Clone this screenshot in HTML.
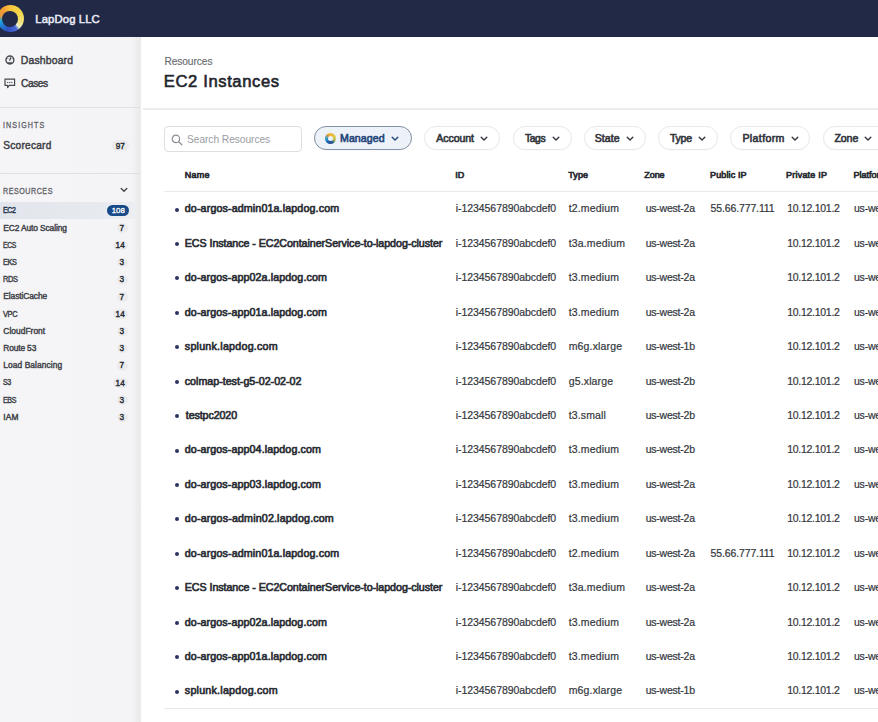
<!DOCTYPE html><html><head><meta charset="utf-8"><style>
*{margin:0;padding:0;box-sizing:border-box}
html,body{width:878px;height:722px;overflow:hidden;background:#fff;font-family:"Liberation Sans",sans-serif}
.t{position:absolute;white-space:nowrap;line-height:normal;font-family:"Liberation Sans",sans-serif}
.a{position:absolute}
#hdr{position:absolute;left:0;top:0;width:878px;height:36.6px;background:#212946}
#logo{position:absolute;left:-3.1px;top:5px;width:27px;height:27px;border-radius:50%;
 background:conic-gradient(from 0deg,#f6c53e 0deg,#f5d84a 60deg,#f2e27a 110deg,#e8eccc 135deg,#4a6ad8 150deg,#2f4fbf 195deg,#1e7fd2 230deg,#19a8df 255deg,#e99a3a 285deg,#f39a35 315deg,#f6b43a 345deg,#f6c53e 360deg)}
#logo:after{content:"";position:absolute;left:5.5px;top:5.5px;width:16px;height:16px;border-radius:50%;background:#212946}
#side{position:absolute;left:0;top:36.6px;width:142px;height:686px;background:linear-gradient(90deg,#f5f5f7 0px,#f4f4f6 132px,#eeeeef 136px,#ebebec 140.5px,#fbfbfa 141px,#ffffff 142px)}
.hr{position:absolute;height:1px;background:#dfe0e4}
.bd{position:absolute;border-radius:6px;background:#ebebee}
.sel{position:absolute;left:0;top:202px;width:136px;height:16.5px;background:linear-gradient(90deg,#e2e6ec,#e6e9ee 70%,#eceef1);border-radius:0 4px 4px 0}
.chev{position:absolute;border-right:1.3px solid #45484e;border-bottom:1.3px solid #45484e;transform:rotate(45deg)}
.search{position:absolute;left:164px;top:126px;width:138px;height:26px;border:1px solid #dddfe3;border-radius:4px;background:#fff}
.btn{position:absolute;top:126.3px;height:24.2px;border:1px solid #e8e9eb;border-radius:12.5px;background:#fff;box-shadow:0 0.5px 1px rgba(0,0,0,0.04)}
.btn.m{background:#edf2f8;border-color:#8391a5}
.ring{position:absolute;left:325.2px;top:133.1px;width:11px;height:11px;border-radius:50%;background:conic-gradient(#f2b63a,#d9c94a 70deg,#b8c060 110deg,#2e5f8a 150deg,#1f4f9a 200deg,#1e8fd0 250deg,#3aa0c8 280deg,#e39a3a 320deg,#f2b63a)}
.ring:after{content:"";position:absolute;left:2.7px;top:2.7px;width:5.6px;height:5.6px;border-radius:50%;background:#edf2f8}
.dot{position:absolute;left:175.1px;width:4px;height:4px;border-radius:50%;background:#2b3560}
</style></head><body>
<div id="hdr"><div id="logo"></div></div>
<div id="side"></div>
<svg class="a" style="left:4px;top:54px" width="12" height="12" viewBox="0 0 12 12"><circle cx="5.9" cy="6" r="3.95" fill="none" stroke="#44474d" stroke-width="1.4"/><path d="M2.6 8.2 A3.95 3.95 0 0 0 9.2 8.2 Z" fill="#44474d"/><path d="M5.8 6.4 L6.6 3.9" stroke="#44474d" stroke-width="1.3" stroke-linecap="round"/><circle cx="3.9" cy="4.5" r=".55" fill="#44474d"/><circle cx="8.1" cy="4.6" r=".55" fill="#44474d"/></svg>
<svg class="a" style="left:3.5px;top:77.5px" width="12" height="12" viewBox="0 0 12 12"><path d="M1 1.2 H10.6 V7.4 H5.2 L3.6 9.6 V7.4 H1 Z" fill="none" stroke="#46494f" stroke-width="1.2" stroke-linejoin="round"/><circle cx="3.7" cy="4.4" r=".65" fill="#46494f"/><circle cx="5.8" cy="4.4" r=".65" fill="#46494f"/><circle cx="7.9" cy="4.4" r=".65" fill="#46494f"/></svg>
<div class="hr" style="left:0;top:107px;width:140px"></div>
<div class="bd" style="left:112px;top:140px;width:16.5px;height:11px"></div>
<div class="hr" style="left:0;top:173px;width:140px"></div>
<svg class="a" style="left:119.7px;top:186.6px" width="8" height="6" viewBox="0 0 8 6"><path d="M1.2 1.4 L4 4.2 L6.8 1.4" fill="none" stroke="#404349" stroke-width="1.35" stroke-linecap="round" stroke-linejoin="round"/></svg>
<div class="sel"></div>
<div class="a" style="left:107px;top:204.8px;width:22px;height:11.2px;border-radius:6px;background:#174a87"></div>
<div class="bd" style="left:117.2px;top:223.40px;width:11.0px;height:9.5px"></div>
<div class="bd" style="left:112.7px;top:240.60px;width:15.5px;height:9.5px"></div>
<div class="bd" style="left:117.2px;top:257.80px;width:11.0px;height:9.5px"></div>
<div class="bd" style="left:117.2px;top:275.00px;width:11.0px;height:9.5px"></div>
<div class="bd" style="left:117.2px;top:292.20px;width:11.0px;height:9.5px"></div>
<div class="bd" style="left:112.7px;top:309.40px;width:15.5px;height:9.5px"></div>
<div class="bd" style="left:117.2px;top:326.60px;width:11.0px;height:9.5px"></div>
<div class="bd" style="left:117.2px;top:343.80px;width:11.0px;height:9.5px"></div>
<div class="bd" style="left:117.2px;top:361.00px;width:11.0px;height:9.5px"></div>
<div class="bd" style="left:112.7px;top:378.20px;width:15.5px;height:9.5px"></div>
<div class="bd" style="left:117.2px;top:395.40px;width:11.0px;height:9.5px"></div>
<div class="bd" style="left:117.2px;top:412.60px;width:11.0px;height:9.5px"></div>
<div class="hr" style="left:142.5px;top:108.2px;width:736px;height:1.6px;background:#ececee"></div>
<div class="search"></div>
<svg class="a" style="left:170.5px;top:134px" width="12" height="12" viewBox="0 0 12 12"><circle cx="4.9" cy="4.9" r="3.7" fill="none" stroke="#8a8d93" stroke-width="1.2"/><path d="M7.6 7.6 L10.8 10.8" stroke="#8a8d93" stroke-width="1.3" stroke-linecap="round"/></svg>
<div class="btn m" style="left:314.1px;width:97.7px"></div>
<svg class="a" style="left:391.20px;top:136px" width="8" height="6" viewBox="0 0 8 6"><path d="M1.2 1.3 L4 4 L6.8 1.3" fill="none" stroke="#25467a" stroke-width="1.4" stroke-linecap="round" stroke-linejoin="round"/></svg>
<div class="btn" style="left:423.9px;width:76.3px"></div>
<svg class="a" style="left:480.00px;top:136px" width="8" height="6" viewBox="0 0 8 6"><path d="M1.2 1.3 L4 4 L6.8 1.3" fill="none" stroke="#33363d" stroke-width="1.4" stroke-linecap="round" stroke-linejoin="round"/></svg>
<div class="btn" style="left:512.5px;width:59.4px"></div>
<svg class="a" style="left:551.80px;top:136px" width="8" height="6" viewBox="0 0 8 6"><path d="M1.2 1.3 L4 4 L6.8 1.3" fill="none" stroke="#33363d" stroke-width="1.4" stroke-linecap="round" stroke-linejoin="round"/></svg>
<div class="btn" style="left:584.0px;width:62.1px"></div>
<svg class="a" style="left:626.00px;top:136px" width="8" height="6" viewBox="0 0 8 6"><path d="M1.2 1.3 L4 4 L6.8 1.3" fill="none" stroke="#33363d" stroke-width="1.4" stroke-linecap="round" stroke-linejoin="round"/></svg>
<div class="btn" style="left:658.4px;width:60.1px"></div>
<svg class="a" style="left:697.90px;top:136px" width="8" height="6" viewBox="0 0 8 6"><path d="M1.2 1.3 L4 4 L6.8 1.3" fill="none" stroke="#33363d" stroke-width="1.4" stroke-linecap="round" stroke-linejoin="round"/></svg>
<div class="btn" style="left:730.2px;width:80.2px"></div>
<svg class="a" style="left:790.70px;top:136px" width="8" height="6" viewBox="0 0 8 6"><path d="M1.2 1.3 L4 4 L6.8 1.3" fill="none" stroke="#33363d" stroke-width="1.4" stroke-linecap="round" stroke-linejoin="round"/></svg>
<div class="btn" style="left:823.4px;width:81.6px"></div>
<svg class="a" style="left:863.60px;top:136px" width="8" height="6" viewBox="0 0 8 6"><path d="M1.2 1.3 L4 4 L6.8 1.3" fill="none" stroke="#33363d" stroke-width="1.4" stroke-linecap="round" stroke-linejoin="round"/></svg>
<div class="ring"></div>
<div class="hr" style="left:164px;top:190.5px;width:714px;background:#e9eaed"></div>
<div class="dot" style="top:208.00px"></div>
<div class="dot" style="top:242.00px"></div>
<div class="dot" style="top:276.00px"></div>
<div class="dot" style="top:311.00px"></div>
<div class="dot" style="top:345.00px"></div>
<div class="dot" style="top:380.00px"></div>
<div class="dot" style="top:414.00px"></div>
<div class="dot" style="top:449.00px"></div>
<div class="dot" style="top:483.00px"></div>
<div class="dot" style="top:517.00px"></div>
<div class="dot" style="top:552.00px"></div>
<div class="dot" style="top:586.00px"></div>
<div class="dot" style="top:621.00px"></div>
<div class="dot" style="top:655.00px"></div>
<div class="dot" style="top:690.00px"></div>
<div class="hr" style="left:164px;top:708px;width:714px;height:1.2px;background:#e6e7ea"></div>
<div class="t" style="left:35.30px;top:12.50px;font-size:11.30px;-webkit-text-stroke:0.50px;color:#e9ecf6;-webkit-text-stroke-color:#e9ecf6;letter-spacing:0.111px">LapDog LLC</div>
<div class="t" style="left:20.80px;top:55.00px;font-size:10.40px;-webkit-text-stroke:0.45px;color:#3d4046;-webkit-text-stroke-color:#3d4046;letter-spacing:0.175px">Dashboard</div>
<div class="t" style="left:20.85px;top:77.70px;font-size:10.40px;-webkit-text-stroke:0.45px;color:#3d4046;-webkit-text-stroke-color:#3d4046;letter-spacing:-0.450px;transform:scaleX(0.9824);transform-origin:0 0">Cases</div>
<div class="t" style="left:3.30px;top:119.50px;font-size:8.30px;-webkit-text-stroke:0.30px;color:#5e6167;-webkit-text-stroke-color:#5e6167;letter-spacing:1.262px;transform:scaleX(0.8600);transform-origin:0 0">INSIGHTS</div>
<div class="t" style="left:3.30px;top:140.20px;font-size:10.10px;-webkit-text-stroke:0.45px;color:#3f4248;-webkit-text-stroke-color:#3f4248;letter-spacing:0.250px">Scorecard</div>
<div class="t" style="left:115.70px;top:142.00px;font-size:8.20px;-webkit-text-stroke:0.40px;color:#2a2d33;-webkit-text-stroke-color:#2a2d33">97</div>
<div class="t" style="left:3.40px;top:185.60px;font-size:8.30px;-webkit-text-stroke:0.30px;color:#5e6167;-webkit-text-stroke-color:#5e6167;letter-spacing:0.610px;transform:scaleX(0.8600);transform-origin:0 0">RESOURCES</div>
<div class="t" style="left:3.30px;top:205.30px;font-size:8.40px;-webkit-text-stroke:0.42px;color:#22344f;-webkit-text-stroke-color:#22344f;letter-spacing:-0.450px;transform:scaleX(0.8327);transform-origin:0 0">EC2</div>
<div class="t" style="left:111.70px;top:206.20px;font-size:7.90px;-webkit-text-stroke:0.30px;color:#ffffff;-webkit-text-stroke-color:#ffffff">108</div>
<div class="t" style="left:3.30px;top:222.50px;font-size:8.40px;-webkit-text-stroke:0.42px;color:#3f4248;-webkit-text-stroke-color:#3f4248;letter-spacing:-0.107px">EC2 Auto Scaling</div>
<div class="t" style="left:119.60px;top:223.80px;font-size:8.20px;-webkit-text-stroke:0.40px;color:#2a2d33;-webkit-text-stroke-color:#2a2d33">7</div>
<div class="t" style="left:3.30px;top:239.70px;font-size:8.40px;-webkit-text-stroke:0.42px;color:#3f4248;-webkit-text-stroke-color:#3f4248;letter-spacing:-0.450px;transform:scaleX(0.8198);transform-origin:0 0">ECS</div>
<div class="t" style="left:115.60px;top:241.00px;font-size:8.20px;-webkit-text-stroke:0.40px;color:#2a2d33;-webkit-text-stroke-color:#2a2d33">14</div>
<div class="t" style="left:3.30px;top:256.90px;font-size:8.40px;-webkit-text-stroke:0.42px;color:#3f4248;-webkit-text-stroke-color:#3f4248;letter-spacing:-0.450px;transform:scaleX(0.8708);transform-origin:0 0">EKS</div>
<div class="t" style="left:119.60px;top:258.20px;font-size:8.20px;-webkit-text-stroke:0.40px;color:#2a2d33;-webkit-text-stroke-color:#2a2d33">3</div>
<div class="t" style="left:3.30px;top:274.10px;font-size:8.40px;-webkit-text-stroke:0.42px;color:#3f4248;-webkit-text-stroke-color:#3f4248;letter-spacing:-0.450px;transform:scaleX(0.8889);transform-origin:0 0">RDS</div>
<div class="t" style="left:119.60px;top:275.40px;font-size:8.20px;-webkit-text-stroke:0.40px;color:#2a2d33;-webkit-text-stroke-color:#2a2d33">3</div>
<div class="t" style="left:3.30px;top:291.30px;font-size:8.40px;-webkit-text-stroke:0.42px;color:#3f4248;-webkit-text-stroke-color:#3f4248;letter-spacing:-0.080px">ElastiCache</div>
<div class="t" style="left:119.60px;top:292.60px;font-size:8.20px;-webkit-text-stroke:0.40px;color:#2a2d33;-webkit-text-stroke-color:#2a2d33">7</div>
<div class="t" style="left:3.30px;top:308.50px;font-size:8.40px;-webkit-text-stroke:0.42px;color:#3f4248;-webkit-text-stroke-color:#3f4248;letter-spacing:-0.450px;transform:scaleX(0.8904);transform-origin:0 0">VPC</div>
<div class="t" style="left:115.60px;top:309.80px;font-size:8.20px;-webkit-text-stroke:0.40px;color:#2a2d33;-webkit-text-stroke-color:#2a2d33">14</div>
<div class="t" style="left:3.30px;top:325.70px;font-size:8.40px;-webkit-text-stroke:0.42px;color:#3f4248;-webkit-text-stroke-color:#3f4248;letter-spacing:0.044px">CloudFront</div>
<div class="t" style="left:119.60px;top:327.00px;font-size:8.20px;-webkit-text-stroke:0.40px;color:#2a2d33;-webkit-text-stroke-color:#2a2d33">3</div>
<div class="t" style="left:3.30px;top:342.90px;font-size:8.40px;-webkit-text-stroke:0.42px;color:#3f4248;-webkit-text-stroke-color:#3f4248;letter-spacing:-0.143px">Route 53</div>
<div class="t" style="left:119.60px;top:344.20px;font-size:8.20px;-webkit-text-stroke:0.40px;color:#2a2d33;-webkit-text-stroke-color:#2a2d33">3</div>
<div class="t" style="left:3.30px;top:360.10px;font-size:8.40px;-webkit-text-stroke:0.42px;color:#3f4248;-webkit-text-stroke-color:#3f4248;letter-spacing:0.077px">Load Balancing</div>
<div class="t" style="left:119.60px;top:361.40px;font-size:8.20px;-webkit-text-stroke:0.40px;color:#2a2d33;-webkit-text-stroke-color:#2a2d33">7</div>
<div class="t" style="left:3.30px;top:377.30px;font-size:8.40px;-webkit-text-stroke:0.42px;color:#3f4248;-webkit-text-stroke-color:#3f4248;letter-spacing:-0.450px;transform:scaleX(0.8406);transform-origin:0 0">S3</div>
<div class="t" style="left:115.60px;top:378.60px;font-size:8.20px;-webkit-text-stroke:0.40px;color:#2a2d33;-webkit-text-stroke-color:#2a2d33">14</div>
<div class="t" style="left:3.30px;top:394.50px;font-size:8.40px;-webkit-text-stroke:0.42px;color:#3f4248;-webkit-text-stroke-color:#3f4248;letter-spacing:-0.450px;transform:scaleX(0.8449);transform-origin:0 0">EBS</div>
<div class="t" style="left:119.60px;top:395.80px;font-size:8.20px;-webkit-text-stroke:0.40px;color:#2a2d33;-webkit-text-stroke-color:#2a2d33">3</div>
<div class="t" style="left:3.30px;top:411.70px;font-size:8.40px;-webkit-text-stroke:0.42px;color:#3f4248;-webkit-text-stroke-color:#3f4248;letter-spacing:0.100px">IAM</div>
<div class="t" style="left:119.60px;top:413.00px;font-size:8.20px;-webkit-text-stroke:0.40px;color:#2a2d33;-webkit-text-stroke-color:#2a2d33">3</div>
<div class="t" style="left:164.40px;top:56.20px;font-size:10.20px;-webkit-text-stroke:0.15px;color:#686b71;-webkit-text-stroke-color:#686b71;letter-spacing:-0.075px">Resources</div>
<div class="t" style="left:163.80px;top:71.70px;font-size:16.60px;-webkit-text-stroke:0.60px;color:#22252c;-webkit-text-stroke-color:#22252c;letter-spacing:0.617px">EC2 Instances</div>
<div class="t" style="left:187.00px;top:134.00px;font-size:10.20px;color:#9a9ca3;letter-spacing:-0.040px">Search Resources</div>
<div class="t" style="left:340.00px;top:132.20px;font-size:10.60px;-webkit-text-stroke:0.62px;color:#25467a;-webkit-text-stroke-color:#25467a;letter-spacing:0.067px">Managed</div>
<div class="t" style="left:436.30px;top:132.20px;font-size:10.60px;-webkit-text-stroke:0.62px;color:#33363d;-webkit-text-stroke-color:#33363d;letter-spacing:-0.100px">Account</div>
<div class="t" style="left:524.50px;top:132.20px;font-size:10.60px;-webkit-text-stroke:0.62px;color:#33363d;-webkit-text-stroke-color:#33363d;letter-spacing:-0.450px;transform:scaleX(0.9792);transform-origin:0 0">Tags</div>
<div class="t" style="left:594.70px;top:132.20px;font-size:10.60px;-webkit-text-stroke:0.62px;color:#33363d;-webkit-text-stroke-color:#33363d;letter-spacing:0.050px">State</div>
<div class="t" style="left:669.90px;top:132.20px;font-size:10.60px;-webkit-text-stroke:0.62px;color:#33363d;-webkit-text-stroke-color:#33363d;letter-spacing:-0.267px">Type</div>
<div class="t" style="left:742.40px;top:132.20px;font-size:10.60px;-webkit-text-stroke:0.62px;color:#33363d;-webkit-text-stroke-color:#33363d;letter-spacing:0.371px">Platform</div>
<div class="t" style="left:834.40px;top:132.20px;font-size:10.60px;-webkit-text-stroke:0.62px;color:#33363d;-webkit-text-stroke-color:#33363d;letter-spacing:-0.067px">Zone</div>
<div class="t" style="left:184.80px;top:170.20px;font-size:9.00px;-webkit-text-stroke:0.70px;color:#2b2e35;-webkit-text-stroke-color:#2b2e35;letter-spacing:0.267px">Name</div>
<div class="t" style="left:455.30px;top:170.20px;font-size:9.00px;-webkit-text-stroke:0.70px;color:#2b2e35;-webkit-text-stroke-color:#2b2e35">ID</div>
<div class="t" style="left:568.30px;top:170.20px;font-size:9.00px;-webkit-text-stroke:0.70px;color:#2b2e35;-webkit-text-stroke-color:#2b2e35;letter-spacing:0.067px">Type</div>
<div class="t" style="left:644.30px;top:170.20px;font-size:9.00px;-webkit-text-stroke:0.70px;color:#2b2e35;-webkit-text-stroke-color:#2b2e35;letter-spacing:-0.067px">Zone</div>
<div class="t" style="left:710.00px;top:170.20px;font-size:9.00px;-webkit-text-stroke:0.70px;color:#2b2e35;-webkit-text-stroke-color:#2b2e35;letter-spacing:0.125px">Public IP</div>
<div class="t" style="left:786.00px;top:170.20px;font-size:9.00px;-webkit-text-stroke:0.70px;color:#2b2e35;-webkit-text-stroke-color:#2b2e35;letter-spacing:0.222px">Private IP</div>
<div class="t" style="left:853.50px;top:170.20px;font-size:9.00px;-webkit-text-stroke:0.70px;color:#2b2e35;-webkit-text-stroke-color:#2b2e35">Platform</div>
<div class="t" style="left:184.80px;top:202.40px;font-size:10.70px;-webkit-text-stroke:0.65px;color:#2a2d34;-webkit-text-stroke-color:#2a2d34;letter-spacing:0.126px">do-argos-admin01a.lapdog.com</div>
<div class="t" style="left:455.80px;top:202.40px;font-size:10.50px;-webkit-text-stroke:0.20px;color:#33363c;-webkit-text-stroke-color:#33363c;letter-spacing:-0.067px">i-1234567890abcdef0</div>
<div class="t" style="left:568.70px;top:202.40px;font-size:10.50px;-webkit-text-stroke:0.20px;color:#33363c;-webkit-text-stroke-color:#33363c;letter-spacing:0.150px">t2.medium</div>
<div class="t" style="left:645.70px;top:202.40px;font-size:10.50px;-webkit-text-stroke:0.20px;color:#33363c;-webkit-text-stroke-color:#33363c;letter-spacing:-0.222px">us-west-2a</div>
<div class="t" style="left:710.60px;top:202.40px;font-size:10.50px;-webkit-text-stroke:0.20px;color:#33363c;-webkit-text-stroke-color:#33363c;letter-spacing:-0.133px">55.66.777.111</div>
<div class="t" style="left:787.20px;top:202.40px;font-size:10.50px;-webkit-text-stroke:0.20px;color:#33363c;-webkit-text-stroke-color:#33363c;letter-spacing:-0.280px">10.12.101.2</div>
<div class="t" style="left:854.00px;top:202.40px;font-size:10.50px;-webkit-text-stroke:0.20px;color:#33363c;-webkit-text-stroke-color:#33363c;letter-spacing:-0.222px">us-west-2a</div>
<div class="t" style="left:184.80px;top:236.83px;font-size:10.70px;-webkit-text-stroke:0.65px;color:#2a2d34;-webkit-text-stroke-color:#2a2d34;letter-spacing:-0.063px">ECS Instance - EC2ContainerService-to-lapdog-cluster</div>
<div class="t" style="left:455.80px;top:236.83px;font-size:10.50px;-webkit-text-stroke:0.20px;color:#33363c;-webkit-text-stroke-color:#33363c;letter-spacing:-0.067px">i-1234567890abcdef0</div>
<div class="t" style="left:568.70px;top:236.83px;font-size:10.50px;-webkit-text-stroke:0.20px;color:#33363c;-webkit-text-stroke-color:#33363c;letter-spacing:0.150px">t3a.medium</div>
<div class="t" style="left:645.70px;top:236.83px;font-size:10.50px;-webkit-text-stroke:0.20px;color:#33363c;-webkit-text-stroke-color:#33363c;letter-spacing:-0.222px">us-west-2a</div>
<div class="t" style="left:787.20px;top:236.83px;font-size:10.50px;-webkit-text-stroke:0.20px;color:#33363c;-webkit-text-stroke-color:#33363c;letter-spacing:-0.280px">10.12.101.2</div>
<div class="t" style="left:854.00px;top:236.83px;font-size:10.50px;-webkit-text-stroke:0.20px;color:#33363c;-webkit-text-stroke-color:#33363c;letter-spacing:-0.222px">us-west-2a</div>
<div class="t" style="left:184.80px;top:271.26px;font-size:10.70px;-webkit-text-stroke:0.65px;color:#2a2d34;-webkit-text-stroke-color:#2a2d34;letter-spacing:0.096px">do-argos-app02a.lapdog.com</div>
<div class="t" style="left:455.80px;top:271.26px;font-size:10.50px;-webkit-text-stroke:0.20px;color:#33363c;-webkit-text-stroke-color:#33363c;letter-spacing:-0.067px">i-1234567890abcdef0</div>
<div class="t" style="left:568.70px;top:271.26px;font-size:10.50px;-webkit-text-stroke:0.20px;color:#33363c;-webkit-text-stroke-color:#33363c;letter-spacing:0.150px">t3.medium</div>
<div class="t" style="left:645.70px;top:271.26px;font-size:10.50px;-webkit-text-stroke:0.20px;color:#33363c;-webkit-text-stroke-color:#33363c;letter-spacing:-0.222px">us-west-2a</div>
<div class="t" style="left:787.20px;top:271.26px;font-size:10.50px;-webkit-text-stroke:0.20px;color:#33363c;-webkit-text-stroke-color:#33363c;letter-spacing:-0.280px">10.12.101.2</div>
<div class="t" style="left:854.00px;top:271.26px;font-size:10.50px;-webkit-text-stroke:0.20px;color:#33363c;-webkit-text-stroke-color:#33363c;letter-spacing:-0.222px">us-west-2a</div>
<div class="t" style="left:184.80px;top:305.69px;font-size:10.70px;-webkit-text-stroke:0.65px;color:#2a2d34;-webkit-text-stroke-color:#2a2d34;letter-spacing:0.096px">do-argos-app01a.lapdog.com</div>
<div class="t" style="left:455.80px;top:305.69px;font-size:10.50px;-webkit-text-stroke:0.20px;color:#33363c;-webkit-text-stroke-color:#33363c;letter-spacing:-0.067px">i-1234567890abcdef0</div>
<div class="t" style="left:568.70px;top:305.69px;font-size:10.50px;-webkit-text-stroke:0.20px;color:#33363c;-webkit-text-stroke-color:#33363c;letter-spacing:0.150px">t3.medium</div>
<div class="t" style="left:645.70px;top:305.69px;font-size:10.50px;-webkit-text-stroke:0.20px;color:#33363c;-webkit-text-stroke-color:#33363c;letter-spacing:-0.222px">us-west-2a</div>
<div class="t" style="left:787.20px;top:305.69px;font-size:10.50px;-webkit-text-stroke:0.20px;color:#33363c;-webkit-text-stroke-color:#33363c;letter-spacing:-0.280px">10.12.101.2</div>
<div class="t" style="left:854.00px;top:305.69px;font-size:10.50px;-webkit-text-stroke:0.20px;color:#33363c;-webkit-text-stroke-color:#33363c;letter-spacing:-0.222px">us-west-2a</div>
<div class="t" style="left:184.80px;top:340.12px;font-size:10.70px;-webkit-text-stroke:0.65px;color:#2a2d34;-webkit-text-stroke-color:#2a2d34;letter-spacing:0.237px">splunk.lapdog.com</div>
<div class="t" style="left:455.80px;top:340.12px;font-size:10.50px;-webkit-text-stroke:0.20px;color:#33363c;-webkit-text-stroke-color:#33363c;letter-spacing:-0.067px">i-1234567890abcdef0</div>
<div class="t" style="left:568.70px;top:340.12px;font-size:10.50px;-webkit-text-stroke:0.20px;color:#33363c;-webkit-text-stroke-color:#33363c;letter-spacing:0.150px">m6g.xlarge</div>
<div class="t" style="left:645.70px;top:340.12px;font-size:10.50px;-webkit-text-stroke:0.20px;color:#33363c;-webkit-text-stroke-color:#33363c;letter-spacing:-0.222px">us-west-1b</div>
<div class="t" style="left:787.20px;top:340.12px;font-size:10.50px;-webkit-text-stroke:0.20px;color:#33363c;-webkit-text-stroke-color:#33363c;letter-spacing:-0.280px">10.12.101.2</div>
<div class="t" style="left:854.00px;top:340.12px;font-size:10.50px;-webkit-text-stroke:0.20px;color:#33363c;-webkit-text-stroke-color:#33363c;letter-spacing:-0.222px">us-west-2a</div>
<div class="t" style="left:184.80px;top:374.55px;font-size:10.70px;-webkit-text-stroke:0.65px;color:#2a2d34;-webkit-text-stroke-color:#2a2d34;letter-spacing:-0.018px">colmap-test-g5-02-02-02</div>
<div class="t" style="left:455.80px;top:374.55px;font-size:10.50px;-webkit-text-stroke:0.20px;color:#33363c;-webkit-text-stroke-color:#33363c;letter-spacing:-0.067px">i-1234567890abcdef0</div>
<div class="t" style="left:568.70px;top:374.55px;font-size:10.50px;-webkit-text-stroke:0.20px;color:#33363c;-webkit-text-stroke-color:#33363c;letter-spacing:0.150px">g5.xlarge</div>
<div class="t" style="left:645.70px;top:374.55px;font-size:10.50px;-webkit-text-stroke:0.20px;color:#33363c;-webkit-text-stroke-color:#33363c;letter-spacing:-0.222px">us-west-2b</div>
<div class="t" style="left:787.20px;top:374.55px;font-size:10.50px;-webkit-text-stroke:0.20px;color:#33363c;-webkit-text-stroke-color:#33363c;letter-spacing:-0.280px">10.12.101.2</div>
<div class="t" style="left:854.00px;top:374.55px;font-size:10.50px;-webkit-text-stroke:0.20px;color:#33363c;-webkit-text-stroke-color:#33363c;letter-spacing:-0.222px">us-west-2a</div>
<div class="t" style="left:185.80px;top:408.98px;font-size:10.70px;-webkit-text-stroke:0.65px;color:#2a2d34;-webkit-text-stroke-color:#2a2d34;letter-spacing:-0.111px">testpc2020</div>
<div class="t" style="left:455.80px;top:408.98px;font-size:10.50px;-webkit-text-stroke:0.20px;color:#33363c;-webkit-text-stroke-color:#33363c;letter-spacing:-0.067px">i-1234567890abcdef0</div>
<div class="t" style="left:568.70px;top:408.98px;font-size:10.50px;-webkit-text-stroke:0.20px;color:#33363c;-webkit-text-stroke-color:#33363c;letter-spacing:0.150px">t3.small</div>
<div class="t" style="left:645.70px;top:408.98px;font-size:10.50px;-webkit-text-stroke:0.20px;color:#33363c;-webkit-text-stroke-color:#33363c;letter-spacing:-0.222px">us-west-2b</div>
<div class="t" style="left:787.20px;top:408.98px;font-size:10.50px;-webkit-text-stroke:0.20px;color:#33363c;-webkit-text-stroke-color:#33363c;letter-spacing:-0.280px">10.12.101.2</div>
<div class="t" style="left:854.00px;top:408.98px;font-size:10.50px;-webkit-text-stroke:0.20px;color:#33363c;-webkit-text-stroke-color:#33363c;letter-spacing:-0.222px">us-west-2a</div>
<div class="t" style="left:184.80px;top:443.41px;font-size:10.70px;-webkit-text-stroke:0.65px;color:#2a2d34;-webkit-text-stroke-color:#2a2d34;letter-spacing:0.100px">do-argos-app04.lapdog.com</div>
<div class="t" style="left:455.80px;top:443.41px;font-size:10.50px;-webkit-text-stroke:0.20px;color:#33363c;-webkit-text-stroke-color:#33363c;letter-spacing:-0.067px">i-1234567890abcdef0</div>
<div class="t" style="left:568.70px;top:443.41px;font-size:10.50px;-webkit-text-stroke:0.20px;color:#33363c;-webkit-text-stroke-color:#33363c;letter-spacing:0.150px">t3.medium</div>
<div class="t" style="left:645.70px;top:443.41px;font-size:10.50px;-webkit-text-stroke:0.20px;color:#33363c;-webkit-text-stroke-color:#33363c;letter-spacing:-0.222px">us-west-2b</div>
<div class="t" style="left:787.20px;top:443.41px;font-size:10.50px;-webkit-text-stroke:0.20px;color:#33363c;-webkit-text-stroke-color:#33363c;letter-spacing:-0.280px">10.12.101.2</div>
<div class="t" style="left:854.00px;top:443.41px;font-size:10.50px;-webkit-text-stroke:0.20px;color:#33363c;-webkit-text-stroke-color:#33363c;letter-spacing:-0.222px">us-west-2a</div>
<div class="t" style="left:184.80px;top:477.84px;font-size:10.70px;-webkit-text-stroke:0.65px;color:#2a2d34;-webkit-text-stroke-color:#2a2d34;letter-spacing:0.100px">do-argos-app03.lapdog.com</div>
<div class="t" style="left:455.80px;top:477.84px;font-size:10.50px;-webkit-text-stroke:0.20px;color:#33363c;-webkit-text-stroke-color:#33363c;letter-spacing:-0.067px">i-1234567890abcdef0</div>
<div class="t" style="left:568.70px;top:477.84px;font-size:10.50px;-webkit-text-stroke:0.20px;color:#33363c;-webkit-text-stroke-color:#33363c;letter-spacing:0.150px">t3.medium</div>
<div class="t" style="left:645.70px;top:477.84px;font-size:10.50px;-webkit-text-stroke:0.20px;color:#33363c;-webkit-text-stroke-color:#33363c;letter-spacing:-0.222px">us-west-2a</div>
<div class="t" style="left:787.20px;top:477.84px;font-size:10.50px;-webkit-text-stroke:0.20px;color:#33363c;-webkit-text-stroke-color:#33363c;letter-spacing:-0.280px">10.12.101.2</div>
<div class="t" style="left:854.00px;top:477.84px;font-size:10.50px;-webkit-text-stroke:0.20px;color:#33363c;-webkit-text-stroke-color:#33363c;letter-spacing:-0.222px">us-west-2a</div>
<div class="t" style="left:184.80px;top:512.27px;font-size:10.70px;-webkit-text-stroke:0.65px;color:#2a2d34;-webkit-text-stroke-color:#2a2d34;letter-spacing:0.154px">do-argos-admin02.lapdog.com</div>
<div class="t" style="left:455.80px;top:512.27px;font-size:10.50px;-webkit-text-stroke:0.20px;color:#33363c;-webkit-text-stroke-color:#33363c;letter-spacing:-0.067px">i-1234567890abcdef0</div>
<div class="t" style="left:568.70px;top:512.27px;font-size:10.50px;-webkit-text-stroke:0.20px;color:#33363c;-webkit-text-stroke-color:#33363c;letter-spacing:0.150px">t3.medium</div>
<div class="t" style="left:645.70px;top:512.27px;font-size:10.50px;-webkit-text-stroke:0.20px;color:#33363c;-webkit-text-stroke-color:#33363c;letter-spacing:-0.222px">us-west-2a</div>
<div class="t" style="left:787.20px;top:512.27px;font-size:10.50px;-webkit-text-stroke:0.20px;color:#33363c;-webkit-text-stroke-color:#33363c;letter-spacing:-0.280px">10.12.101.2</div>
<div class="t" style="left:854.00px;top:512.27px;font-size:10.50px;-webkit-text-stroke:0.20px;color:#33363c;-webkit-text-stroke-color:#33363c;letter-spacing:-0.222px">us-west-2a</div>
<div class="t" style="left:184.80px;top:546.70px;font-size:10.70px;-webkit-text-stroke:0.65px;color:#2a2d34;-webkit-text-stroke-color:#2a2d34;letter-spacing:0.126px">do-argos-admin01a.lapdog.com</div>
<div class="t" style="left:455.80px;top:546.70px;font-size:10.50px;-webkit-text-stroke:0.20px;color:#33363c;-webkit-text-stroke-color:#33363c;letter-spacing:-0.067px">i-1234567890abcdef0</div>
<div class="t" style="left:568.70px;top:546.70px;font-size:10.50px;-webkit-text-stroke:0.20px;color:#33363c;-webkit-text-stroke-color:#33363c;letter-spacing:0.150px">t2.medium</div>
<div class="t" style="left:645.70px;top:546.70px;font-size:10.50px;-webkit-text-stroke:0.20px;color:#33363c;-webkit-text-stroke-color:#33363c;letter-spacing:-0.222px">us-west-2a</div>
<div class="t" style="left:710.60px;top:546.70px;font-size:10.50px;-webkit-text-stroke:0.20px;color:#33363c;-webkit-text-stroke-color:#33363c;letter-spacing:-0.133px">55.66.777.111</div>
<div class="t" style="left:787.20px;top:546.70px;font-size:10.50px;-webkit-text-stroke:0.20px;color:#33363c;-webkit-text-stroke-color:#33363c;letter-spacing:-0.280px">10.12.101.2</div>
<div class="t" style="left:854.00px;top:546.70px;font-size:10.50px;-webkit-text-stroke:0.20px;color:#33363c;-webkit-text-stroke-color:#33363c;letter-spacing:-0.222px">us-west-2a</div>
<div class="t" style="left:184.80px;top:581.13px;font-size:10.70px;-webkit-text-stroke:0.65px;color:#2a2d34;-webkit-text-stroke-color:#2a2d34;letter-spacing:-0.063px">ECS Instance - EC2ContainerService-to-lapdog-cluster</div>
<div class="t" style="left:455.80px;top:581.13px;font-size:10.50px;-webkit-text-stroke:0.20px;color:#33363c;-webkit-text-stroke-color:#33363c;letter-spacing:-0.067px">i-1234567890abcdef0</div>
<div class="t" style="left:568.70px;top:581.13px;font-size:10.50px;-webkit-text-stroke:0.20px;color:#33363c;-webkit-text-stroke-color:#33363c;letter-spacing:0.150px">t3a.medium</div>
<div class="t" style="left:645.70px;top:581.13px;font-size:10.50px;-webkit-text-stroke:0.20px;color:#33363c;-webkit-text-stroke-color:#33363c;letter-spacing:-0.222px">us-west-2a</div>
<div class="t" style="left:787.20px;top:581.13px;font-size:10.50px;-webkit-text-stroke:0.20px;color:#33363c;-webkit-text-stroke-color:#33363c;letter-spacing:-0.280px">10.12.101.2</div>
<div class="t" style="left:854.00px;top:581.13px;font-size:10.50px;-webkit-text-stroke:0.20px;color:#33363c;-webkit-text-stroke-color:#33363c;letter-spacing:-0.222px">us-west-2a</div>
<div class="t" style="left:184.80px;top:615.56px;font-size:10.70px;-webkit-text-stroke:0.65px;color:#2a2d34;-webkit-text-stroke-color:#2a2d34;letter-spacing:0.096px">do-argos-app02a.lapdog.com</div>
<div class="t" style="left:455.80px;top:615.56px;font-size:10.50px;-webkit-text-stroke:0.20px;color:#33363c;-webkit-text-stroke-color:#33363c;letter-spacing:-0.067px">i-1234567890abcdef0</div>
<div class="t" style="left:568.70px;top:615.56px;font-size:10.50px;-webkit-text-stroke:0.20px;color:#33363c;-webkit-text-stroke-color:#33363c;letter-spacing:0.150px">t3.medium</div>
<div class="t" style="left:645.70px;top:615.56px;font-size:10.50px;-webkit-text-stroke:0.20px;color:#33363c;-webkit-text-stroke-color:#33363c;letter-spacing:-0.222px">us-west-2a</div>
<div class="t" style="left:787.20px;top:615.56px;font-size:10.50px;-webkit-text-stroke:0.20px;color:#33363c;-webkit-text-stroke-color:#33363c;letter-spacing:-0.280px">10.12.101.2</div>
<div class="t" style="left:854.00px;top:615.56px;font-size:10.50px;-webkit-text-stroke:0.20px;color:#33363c;-webkit-text-stroke-color:#33363c;letter-spacing:-0.222px">us-west-2a</div>
<div class="t" style="left:184.80px;top:649.99px;font-size:10.70px;-webkit-text-stroke:0.65px;color:#2a2d34;-webkit-text-stroke-color:#2a2d34;letter-spacing:0.096px">do-argos-app01a.lapdog.com</div>
<div class="t" style="left:455.80px;top:649.99px;font-size:10.50px;-webkit-text-stroke:0.20px;color:#33363c;-webkit-text-stroke-color:#33363c;letter-spacing:-0.067px">i-1234567890abcdef0</div>
<div class="t" style="left:568.70px;top:649.99px;font-size:10.50px;-webkit-text-stroke:0.20px;color:#33363c;-webkit-text-stroke-color:#33363c;letter-spacing:0.150px">t3.medium</div>
<div class="t" style="left:645.70px;top:649.99px;font-size:10.50px;-webkit-text-stroke:0.20px;color:#33363c;-webkit-text-stroke-color:#33363c;letter-spacing:-0.222px">us-west-2a</div>
<div class="t" style="left:787.20px;top:649.99px;font-size:10.50px;-webkit-text-stroke:0.20px;color:#33363c;-webkit-text-stroke-color:#33363c;letter-spacing:-0.280px">10.12.101.2</div>
<div class="t" style="left:854.00px;top:649.99px;font-size:10.50px;-webkit-text-stroke:0.20px;color:#33363c;-webkit-text-stroke-color:#33363c;letter-spacing:-0.222px">us-west-2a</div>
<div class="t" style="left:184.80px;top:684.42px;font-size:10.70px;-webkit-text-stroke:0.65px;color:#2a2d34;-webkit-text-stroke-color:#2a2d34;letter-spacing:0.237px">splunk.lapdog.com</div>
<div class="t" style="left:455.80px;top:684.42px;font-size:10.50px;-webkit-text-stroke:0.20px;color:#33363c;-webkit-text-stroke-color:#33363c;letter-spacing:-0.067px">i-1234567890abcdef0</div>
<div class="t" style="left:568.70px;top:684.42px;font-size:10.50px;-webkit-text-stroke:0.20px;color:#33363c;-webkit-text-stroke-color:#33363c;letter-spacing:0.150px">m6g.xlarge</div>
<div class="t" style="left:645.70px;top:684.42px;font-size:10.50px;-webkit-text-stroke:0.20px;color:#33363c;-webkit-text-stroke-color:#33363c;letter-spacing:-0.222px">us-west-1b</div>
<div class="t" style="left:787.20px;top:684.42px;font-size:10.50px;-webkit-text-stroke:0.20px;color:#33363c;-webkit-text-stroke-color:#33363c;letter-spacing:-0.280px">10.12.101.2</div>
<div class="t" style="left:854.00px;top:684.42px;font-size:10.50px;-webkit-text-stroke:0.20px;color:#33363c;-webkit-text-stroke-color:#33363c;letter-spacing:-0.222px">us-west-2a</div>
<div class="t" style="left:174.00px;top:719.60px;font-size:10.50px;color:#d3d5d9;letter-spacing:1.207px">Showing 1 to 15 of 108 results</div>
</body></html>
